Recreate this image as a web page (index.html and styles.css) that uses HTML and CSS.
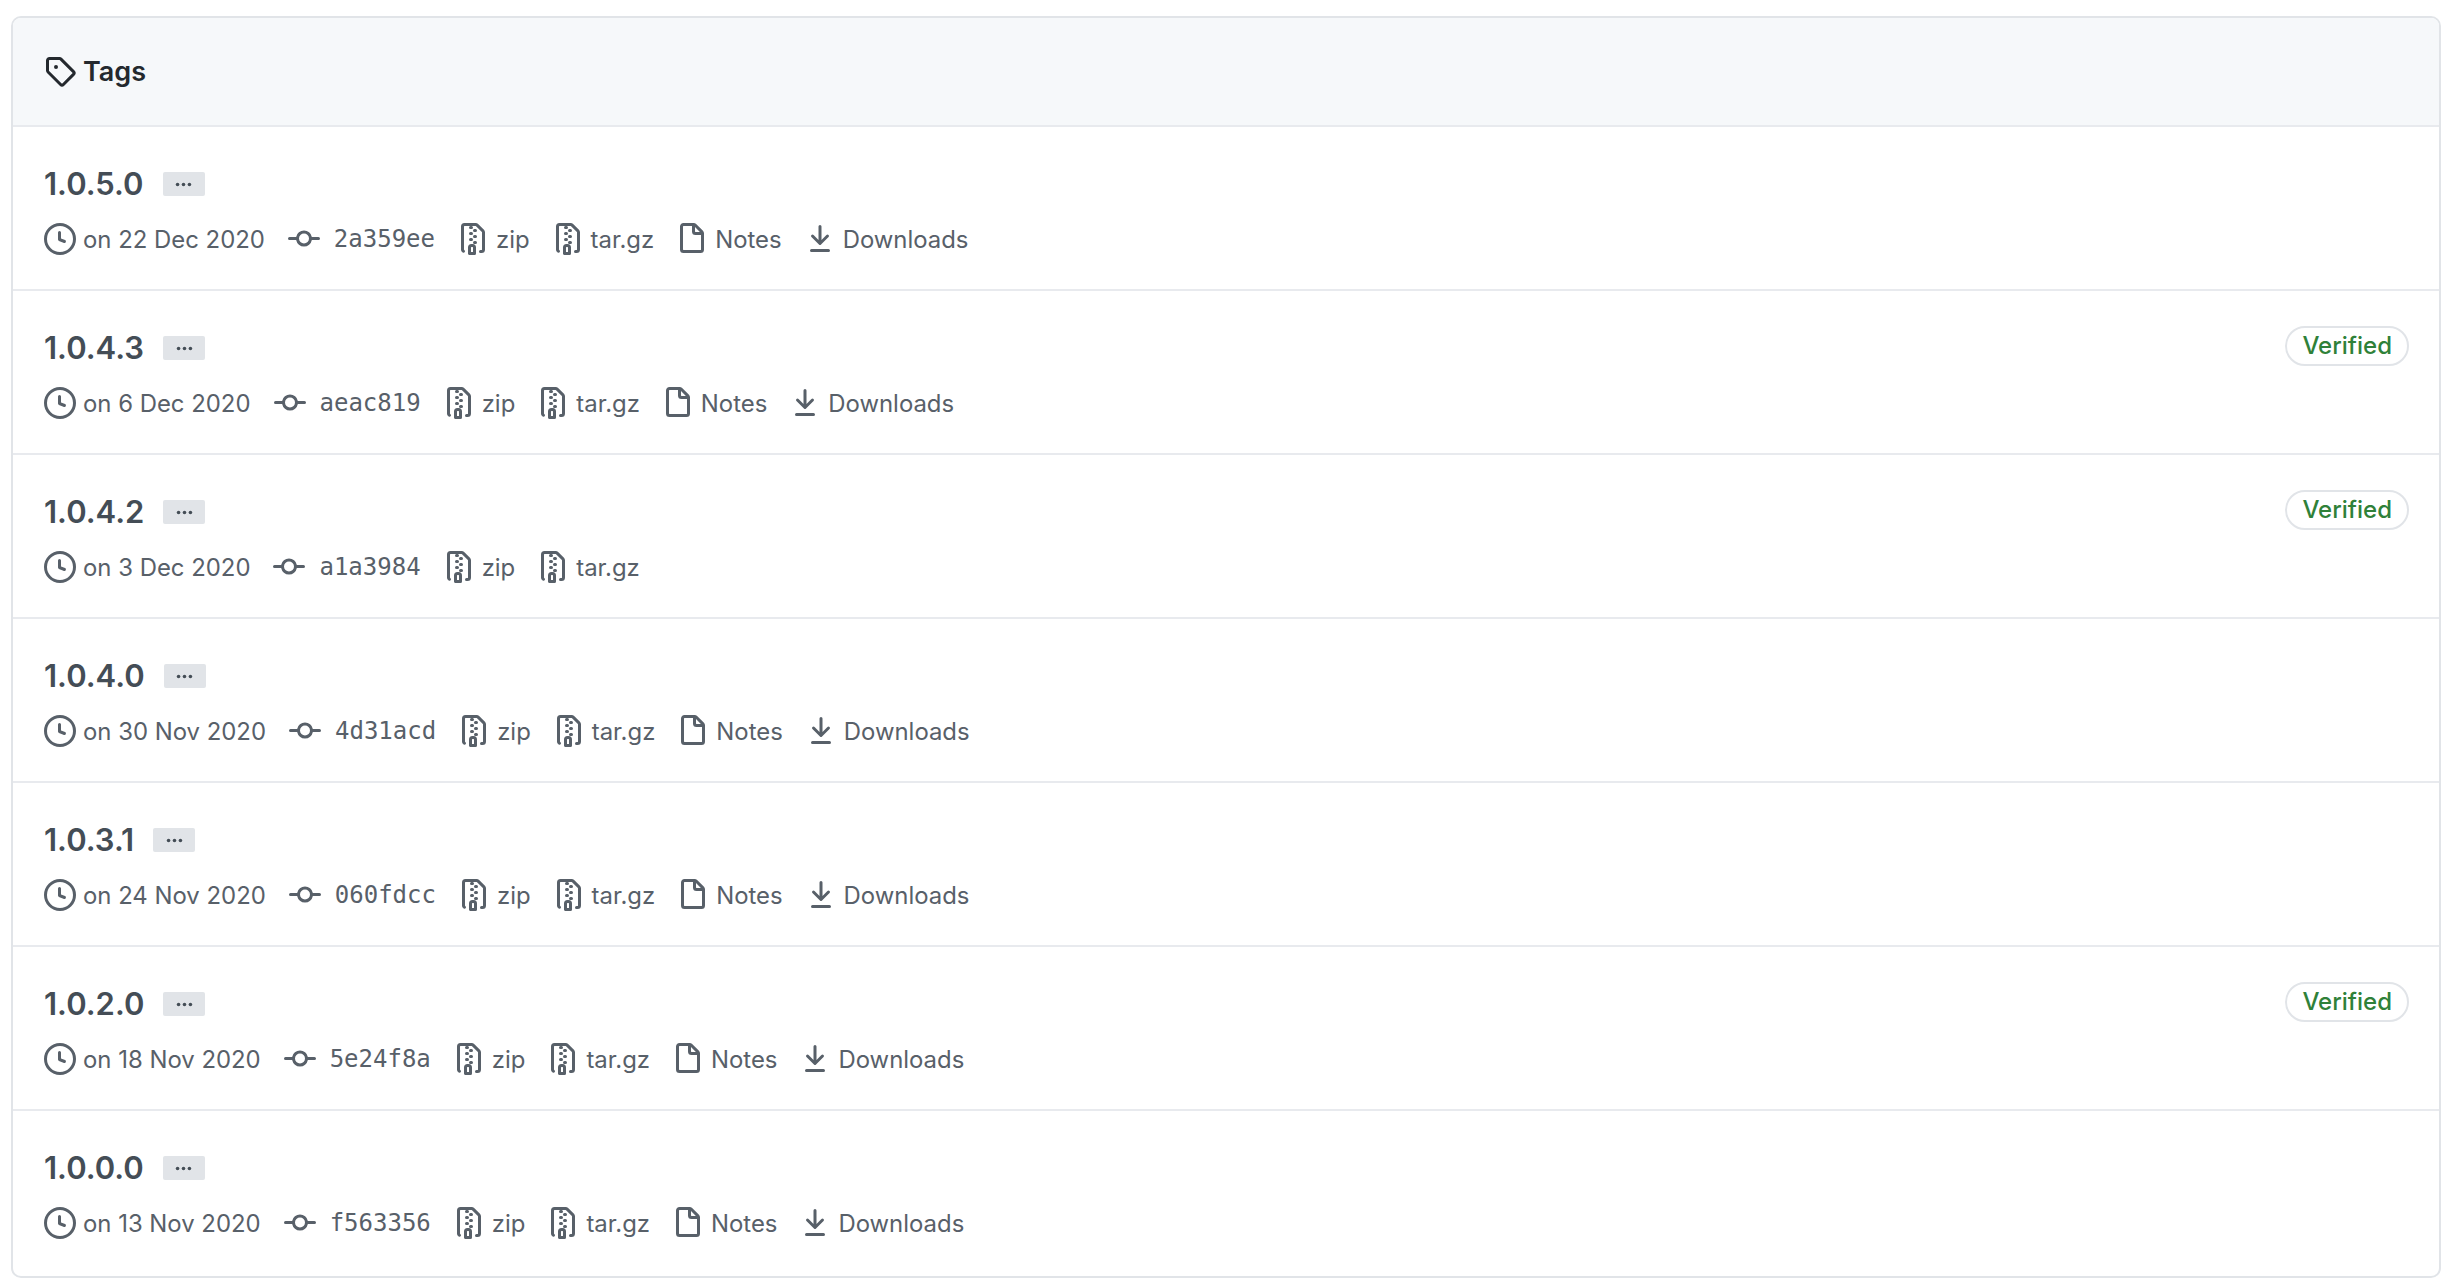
FILE: index.html
```html
<!DOCTYPE html>
<html lang="en">
<head>
    <meta charset="UTF-8">
    <title>Tags</title>
    <link rel="stylesheet" href="styles.css">
</head>
<body>
    <!-- Icon sprite -->
    <svg class="sprite" xmlns="http://www.w3.org/2000/svg">
        <symbol id="i-tag" viewBox="0 0 16 16"><path fill-rule="evenodd" d="M2.5 7.775V2.75a.25.25 0 01.25-.25h5.025a.25.25 0 01.177.073l6.25 6.25a.25.25 0 010 .354l-5.025 5.025a.25.25 0 01-.354 0l-6.25-6.25a.25.25 0 01-.073-.177zm-1.5 0V2.75C1 1.784 1.784 1 2.75 1h5.025c.464 0 .91.184 1.238.513l6.25 6.25a1.75 1.75 0 010 2.474l-5.026 5.026a1.75 1.75 0 01-2.474 0l-6.25-6.25A1.75 1.75 0 011 7.775zM6 5a1 1 0 100 2 1 1 0 000-2z"/></symbol>
        <symbol id="i-clock" viewBox="0 0 16 16"><path fill-rule="evenodd" d="M1.5 8a6.5 6.5 0 1113 0 6.5 6.5 0 01-13 0zM8 0a8 8 0 100 16A8 8 0 008 0zm.5 4.75a.75.75 0 00-1.5 0v3.5a.75.75 0 00.471.696l2.5 1a.75.75 0 00.557-1.392L8.5 7.742V4.75z"/></symbol>
        <symbol id="i-commit" viewBox="0 0 16 16"><path fill-rule="evenodd" d="M10.5 7.75a2.5 2.5 0 11-5 0 2.5 2.5 0 015 0zm1.43.75a4.002 4.002 0 01-7.86 0H.75a.75.75 0 110-1.5h3.32a4.001 4.001 0 017.86 0h3.32a.75.75 0 110 1.5h-3.32z"/></symbol>
        <symbol id="i-zip" viewBox="0 0 16 16"><path fill-rule="evenodd" d="M3.5 1.75a.25.25 0 01.25-.25h3a.75.75 0 000 1.5h.5a.75.75 0 000-1.5h2.086a.25.25 0 01.177.073l2.914 2.914a.25.25 0 01.073.177v8.586a.25.25 0 01-.25.25h-.5a.75.75 0 000 1.5h.5A1.75 1.75 0 0014 13.25V4.664c0-.464-.184-.909-.513-1.237L10.573.513A1.75 1.75 0 009.336 0H3.75A1.75 1.75 0 002 1.75v11.5c0 .649.353 1.214.874 1.515a.75.75 0 10.752-1.298.25.25 0 01-.126-.217V1.75zM8.75 3a.75.75 0 000 1.5h.5a.75.75 0 000-1.5h-.5zM6 5.25a.75.75 0 01.75-.75h.5a.75.75 0 010 1.5h-.5A.75.75 0 016 5.25zm2 1.5A.75.75 0 018.75 6h.5a.75.75 0 010 1.5h-.5A.75.75 0 018 6.75zm-1.25.75a.75.75 0 000 1.5h.5a.75.75 0 000-1.5h-.5zM8 9.75A.75.75 0 018.75 9h.5a.75.75 0 010 1.5h-.5A.75.75 0 018 9.75zm-.75.75a1.75 1.75 0 00-1.75 1.75v3c0 .414.336.75.75.75h2.5a.75.75 0 00.75-.75v-3a1.75 1.75 0 00-1.75-1.75h-.5zM7 12.25a.25.25 0 01.25-.25h.5a.25.25 0 01.25.25v2.25H7v-2.25z"/></symbol>
        <symbol id="i-file" viewBox="0 0 16 16"><path fill-rule="evenodd" d="M3.75 1.5a.25.25 0 00-.25.25v11.5c0 .138.112.25.25.25h8.5a.25.25 0 00.25-.25V6H9.75A1.75 1.75 0 018 4.25V1.5H3.75zm5.75.56v2.19c0 .138.112.25.25.25h2.19L9.5 2.06zM2 1.75C2 .784 2.784 0 3.75 0h5.086c.464 0 .909.184 1.237.513l3.414 3.414c.329.328.513.773.513 1.237v8.086A1.75 1.75 0 0112.25 15h-8.5A1.75 1.75 0 012 13.25V1.75z"/></symbol>
        <symbol id="i-download" viewBox="0 0 16 16"><path fill-rule="evenodd" d="M7.47 10.78a.75.75 0 001.06 0l3.75-3.75a.75.75 0 00-1.06-1.06L8.75 8.44V1.75a.75.75 0 00-1.5 0v6.69L4.78 5.97a.75.75 0 00-1.06 1.06l3.75 3.75zM3.75 13a.75.75 0 000 1.5h8.5a.75.75 0 000-1.5h-8.5z"/></symbol>
        <symbol id="i-dots" viewBox="0 0 16 16"><circle cx="3" cy="8" r="1.5"/><circle cx="8" cy="8" r="1.5"/><circle cx="13" cy="8" r="1.5"/></symbol>
    </svg>

    <div class="box">
        <div class="box-header">
            <svg class="icon icon-tag"><use href="#i-tag"/></svg>
            <h3>Tags</h3>
        </div>

        <!-- 1.0.5.0 -->
        <div class="tag-row">
            <div class="tag-main">
                <div class="tag-title"><a class="tag-name">1.0.5.0</a><span class="hidden-btn"><svg class="icon-dots"><use href="#i-dots"/></svg></span></div>
                <ul class="meta">
                    <li class="m-date"><svg class="icon"><use href="#i-clock"/></svg>on 22 Dec 2020</li>
                    <li class="m-commit"><svg class="icon"><use href="#i-commit"/></svg><code>2a359ee</code></li>
                    <li class="m-link"><svg class="icon"><use href="#i-zip"/></svg>zip</li>
                    <li class="m-link"><svg class="icon"><use href="#i-zip"/></svg>tar.gz</li>
                    <li class="m-link"><svg class="icon"><use href="#i-file"/></svg>Notes</li>
                    <li class="m-link"><svg class="icon"><use href="#i-download"/></svg>Downloads</li>
                </ul>
            </div>
        </div>

        <!-- 1.0.4.3 -->
        <div class="tag-row">
            <div class="tag-main">
                <div class="tag-title"><a class="tag-name">1.0.4.3</a><span class="hidden-btn"><svg class="icon-dots"><use href="#i-dots"/></svg></span></div>
                <ul class="meta">
                    <li class="m-date"><svg class="icon"><use href="#i-clock"/></svg>on 6 Dec 2020</li>
                    <li class="m-commit"><svg class="icon"><use href="#i-commit"/></svg><code>aeac819</code></li>
                    <li class="m-link"><svg class="icon"><use href="#i-zip"/></svg>zip</li>
                    <li class="m-link"><svg class="icon"><use href="#i-zip"/></svg>tar.gz</li>
                    <li class="m-link"><svg class="icon"><use href="#i-file"/></svg>Notes</li>
                    <li class="m-link"><svg class="icon"><use href="#i-download"/></svg>Downloads</li>
                </ul>
            </div>
            <span class="verified">Verified</span>
        </div>

        <!-- 1.0.4.2 -->
        <div class="tag-row">
            <div class="tag-main">
                <div class="tag-title"><a class="tag-name">1.0.4.2</a><span class="hidden-btn"><svg class="icon-dots"><use href="#i-dots"/></svg></span></div>
                <ul class="meta">
                    <li class="m-date"><svg class="icon"><use href="#i-clock"/></svg>on 3 Dec 2020</li>
                    <li class="m-commit"><svg class="icon"><use href="#i-commit"/></svg><code>a1a3984</code></li>
                    <li class="m-link"><svg class="icon"><use href="#i-zip"/></svg>zip</li>
                    <li class="m-link"><svg class="icon"><use href="#i-zip"/></svg>tar.gz</li>
                </ul>
            </div>
            <span class="verified">Verified</span>
        </div>

        <!-- 1.0.4.0 -->
        <div class="tag-row">
            <div class="tag-main">
                <div class="tag-title"><a class="tag-name">1.0.4.0</a><span class="hidden-btn"><svg class="icon-dots"><use href="#i-dots"/></svg></span></div>
                <ul class="meta">
                    <li class="m-date"><svg class="icon"><use href="#i-clock"/></svg>on 30 Nov 2020</li>
                    <li class="m-commit"><svg class="icon"><use href="#i-commit"/></svg><code>4d31acd</code></li>
                    <li class="m-link"><svg class="icon"><use href="#i-zip"/></svg>zip</li>
                    <li class="m-link"><svg class="icon"><use href="#i-zip"/></svg>tar.gz</li>
                    <li class="m-link"><svg class="icon"><use href="#i-file"/></svg>Notes</li>
                    <li class="m-link"><svg class="icon"><use href="#i-download"/></svg>Downloads</li>
                </ul>
            </div>
        </div>

        <!-- 1.0.3.1 -->
        <div class="tag-row">
            <div class="tag-main">
                <div class="tag-title"><a class="tag-name">1.0.3.1</a><span class="hidden-btn"><svg class="icon-dots"><use href="#i-dots"/></svg></span></div>
                <ul class="meta">
                    <li class="m-date"><svg class="icon"><use href="#i-clock"/></svg>on 24 Nov 2020</li>
                    <li class="m-commit"><svg class="icon"><use href="#i-commit"/></svg><code>060fdcc</code></li>
                    <li class="m-link"><svg class="icon"><use href="#i-zip"/></svg>zip</li>
                    <li class="m-link"><svg class="icon"><use href="#i-zip"/></svg>tar.gz</li>
                    <li class="m-link"><svg class="icon"><use href="#i-file"/></svg>Notes</li>
                    <li class="m-link"><svg class="icon"><use href="#i-download"/></svg>Downloads</li>
                </ul>
            </div>
        </div>

        <!-- 1.0.2.0 -->
        <div class="tag-row">
            <div class="tag-main">
                <div class="tag-title"><a class="tag-name">1.0.2.0</a><span class="hidden-btn"><svg class="icon-dots"><use href="#i-dots"/></svg></span></div>
                <ul class="meta">
                    <li class="m-date"><svg class="icon"><use href="#i-clock"/></svg>on 18 Nov 2020</li>
                    <li class="m-commit"><svg class="icon"><use href="#i-commit"/></svg><code>5e24f8a</code></li>
                    <li class="m-link"><svg class="icon"><use href="#i-zip"/></svg>zip</li>
                    <li class="m-link"><svg class="icon"><use href="#i-zip"/></svg>tar.gz</li>
                    <li class="m-link"><svg class="icon"><use href="#i-file"/></svg>Notes</li>
                    <li class="m-link"><svg class="icon"><use href="#i-download"/></svg>Downloads</li>
                </ul>
            </div>
            <span class="verified">Verified</span>
        </div>

        <!-- 1.0.0.0 -->
        <div class="tag-row">
            <div class="tag-main">
                <div class="tag-title"><a class="tag-name">1.0.0.0</a><span class="hidden-btn"><svg class="icon-dots"><use href="#i-dots"/></svg></span></div>
                <ul class="meta">
                    <li class="m-date"><svg class="icon"><use href="#i-clock"/></svg>on 13 Nov 2020</li>
                    <li class="m-commit"><svg class="icon"><use href="#i-commit"/></svg><code>f563356</code></li>
                    <li class="m-link"><svg class="icon"><use href="#i-zip"/></svg>zip</li>
                    <li class="m-link"><svg class="icon"><use href="#i-zip"/></svg>tar.gz</li>
                    <li class="m-link"><svg class="icon"><use href="#i-file"/></svg>Notes</li>
                    <li class="m-link"><svg class="icon"><use href="#i-download"/></svg>Downloads</li>
                </ul>
            </div>
        </div>
    </div>
</body>
</html>
```

FILE: styles.css
```css
* {
    box-sizing: border-box;
    margin: 0;
    padding: 0;
}

body {
    font-family: Inter, 'Noto Sans', sans-serif;
    font-size: 23.9px;
    color: #586069;
    background-color: #fff;
    padding: 16px 15px 9px 11px;
}

.sprite {
    display: none;
}

.box {
    border: 2px solid #e1e4e8;
    border-radius: 10px;
    overflow: hidden;
}

.box-header {
    display: flex;
    align-items: center;
    height: 107px;
    padding: 0 0 1px 31px;
    background-color: #f6f8fa;
    color: #24292e;
}

.box-header h3 {
    font-size: 27px;
    font-weight: 600;
    margin-left: 7px;
}

.icon {
    width: 32px;
    height: 32px;
    fill: currentColor;
    flex-shrink: 0;
}

.tag-row {
    display: flex;
    justify-content: space-between;
    align-items: flex-start;
    height: 164px;
    padding: 0 30px 0 31px;
    border-top: 2px solid #e8eaee;
}

.tag-row:last-child {
    height: 167px;
}

.tag-title {
    display: flex;
    align-items: center;
    height: 38px;
    margin-top: 37px;
}

.tag-name {
    font-size: 31px;
    font-weight: 600;
    color: #444d56;
}

.hidden-btn {
    display: flex;
    align-items: center;
    justify-content: center;
    width: 42px;
    height: 24px;
    margin: 2px 0 0 19px;
    background-color: #e1e4e8;
    border-radius: 2px;
}

.icon-dots {
    width: 19px;
    height: 19px;
    fill: #444d56;
}

.meta {
    display: flex;
    align-items: center;
    list-style: none;
    margin-top: 18px;
    height: 38px;
}

.meta li {
    display: flex;
    align-items: center;
}

.m-date .icon {
    margin-right: 7px;
}

.m-commit {
    margin-left: 23px;
}

.m-commit code {
    font-family: 'DejaVu Sans Mono', monospace;
    font-size: 24px;
    margin-left: 14px;
}

.m-link {
    margin-left: 26px;
}

.m-link .icon {
    margin: 0 7px 0 -4px;
}

.verified {
    margin-top: 35px;
    padding: 5px 15px;
    border: 2px solid #e1e4e8;
    border-radius: 20px;
    font-size: 24px;
    font-weight: 500;
    line-height: 26px;
    color: #2f8139;
}
```
